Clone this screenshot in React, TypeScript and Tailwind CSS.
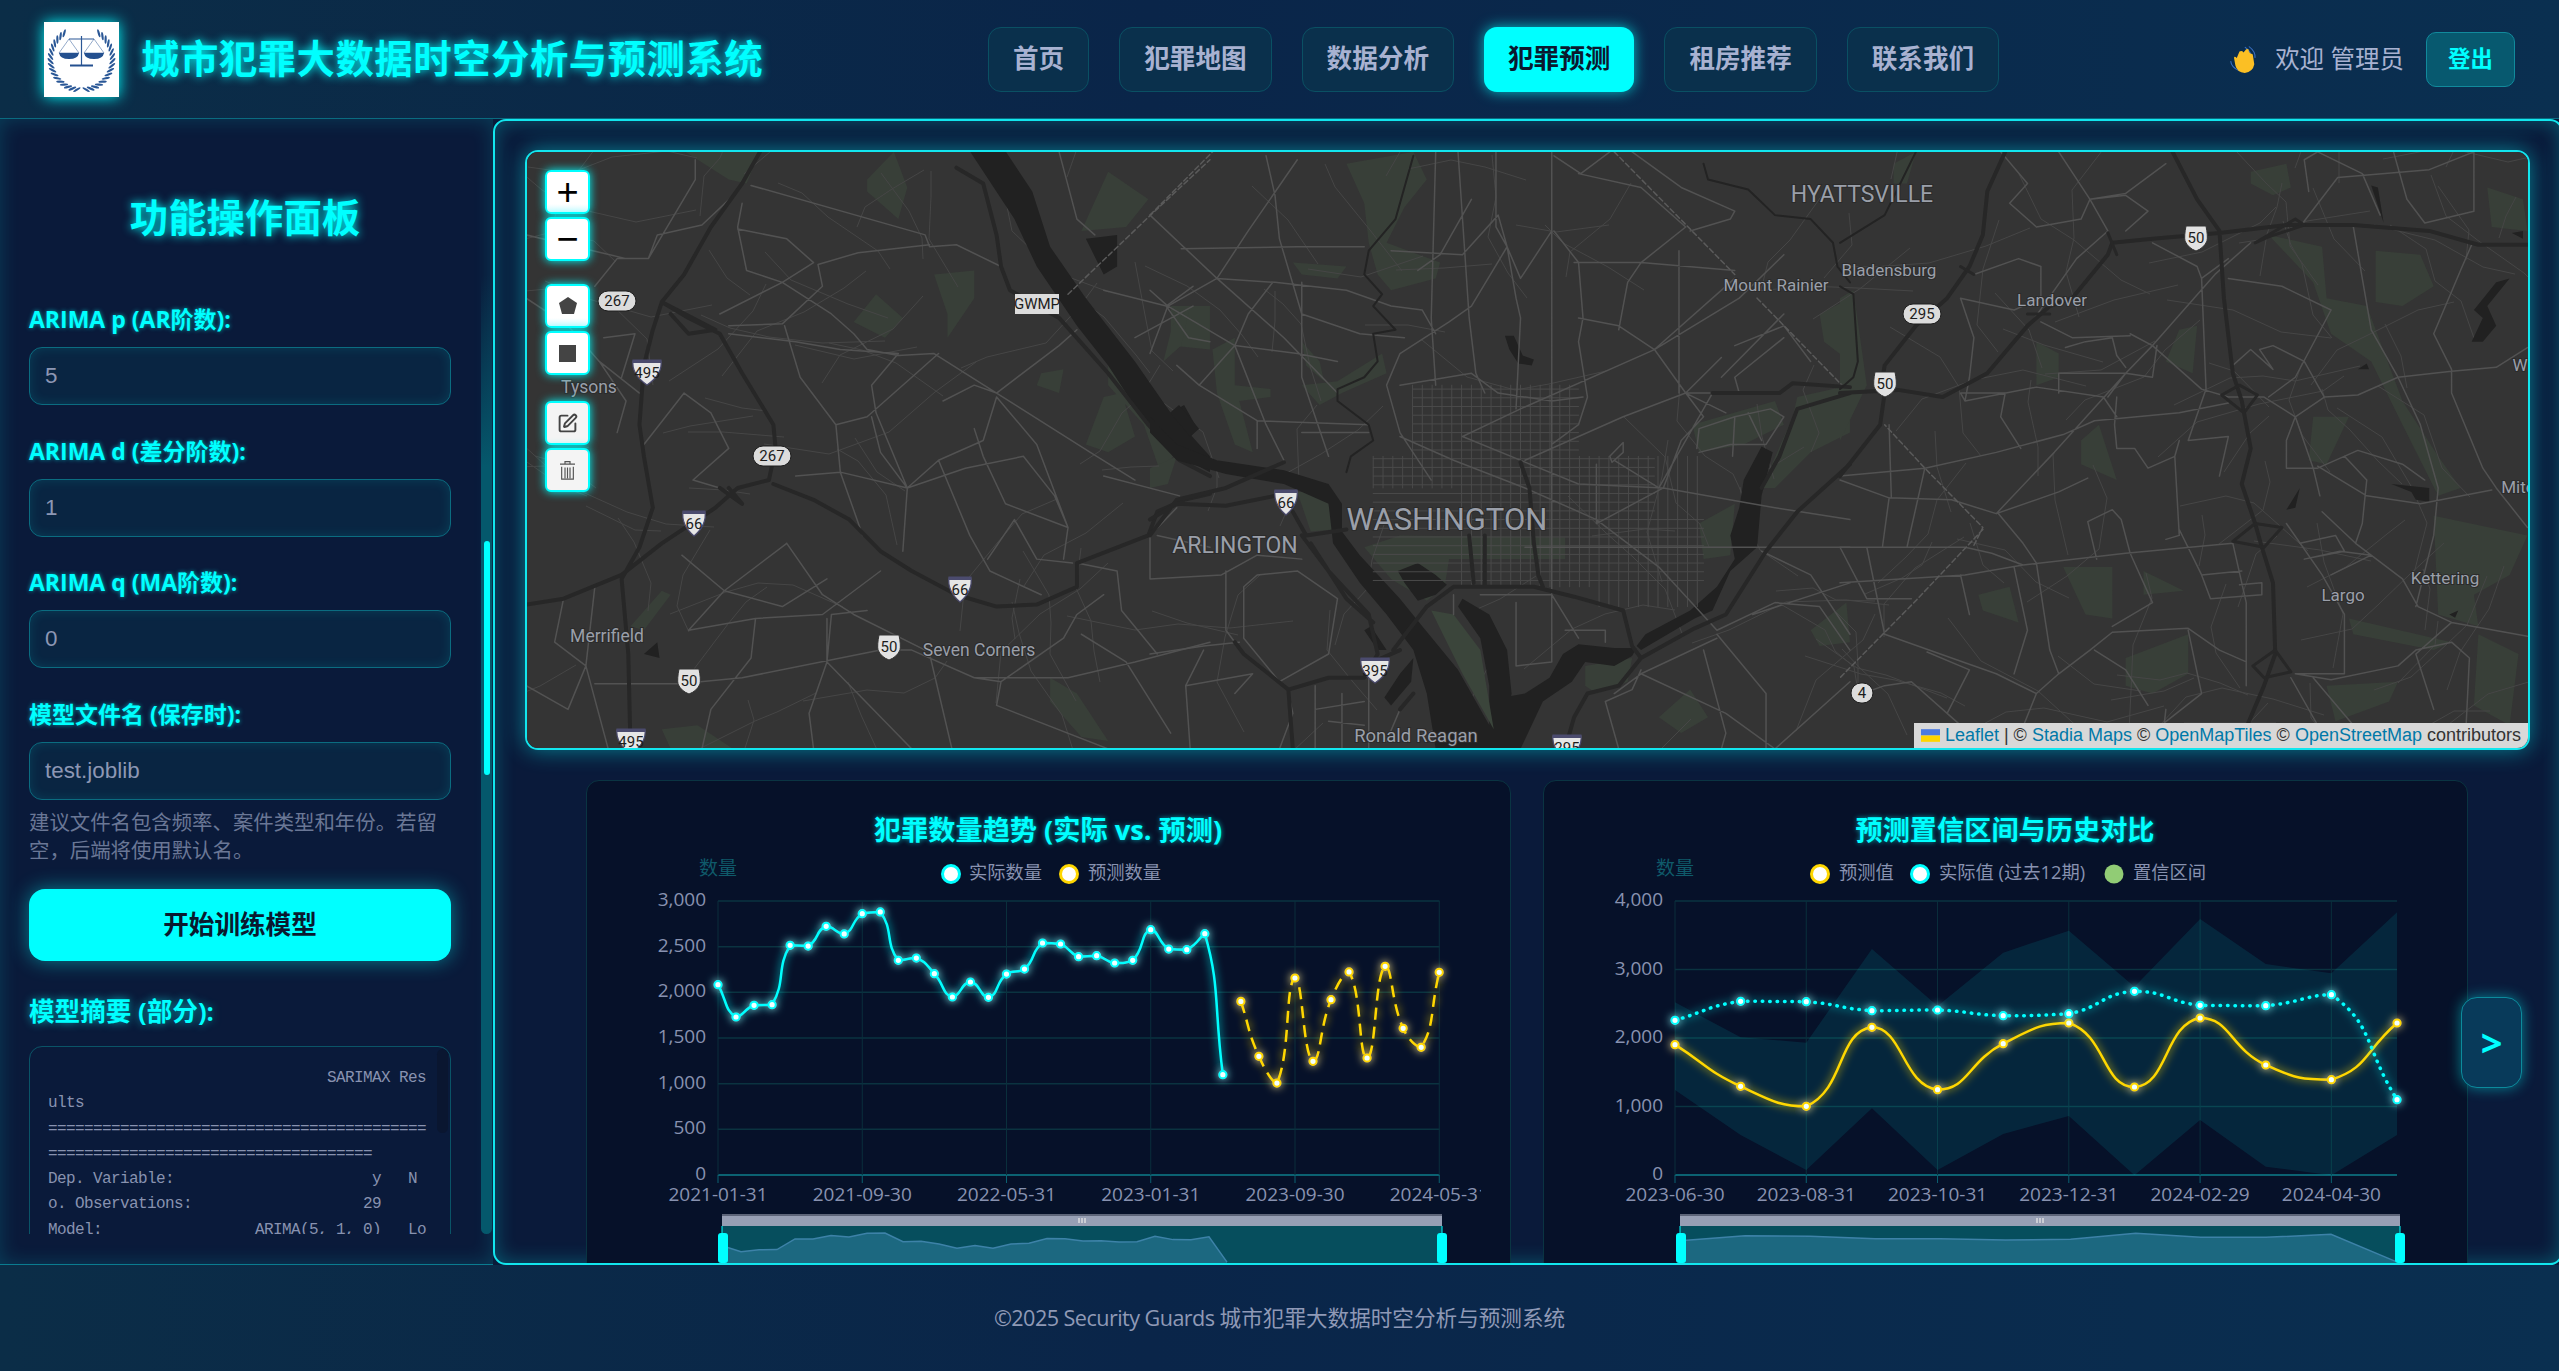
import { SquarePen } from "lucide-react";

// map traced per tile: each string is in its own crop coordinates
const TILES = [
  {
    at: "translate(510 140) scale(0.4464 0.3954)",
    parks:
      "M390 28 L560 28 L530 110 L490 100Z M800 100 L860 30 L890 120 L870 200 L800 130Z M950 340 L1040 330 L1040 400 L980 500 L980 440Z M770 460 L820 390 L880 450 L840 500Z M1280 230 L1340 80 L1430 150 L1380 220Z M1190 590 L1240 580 L1230 640 L1180 620Z M1330 650 L1370 640 L1400 750 L1340 790 L1290 770Z M1340 570 L1430 700 L1490 790 L1460 850 L1420 720 L1340 620Z M1210 1360 L1270 1400 L1340 1520 L1280 1510 L1210 1420Z M340 1490 L420 1480 L500 1540 L360 1540Z M270 1230 L340 1140 L360 1150 L300 1240Z M1480 420 L1568 420 L1568 530 L1480 520Z",
    water:
      "M1030 28 L1110 28 L1170 130 L1210 270 L1290 400 L1400 560 L1480 690 L1568 800 L1568 840 L1500 800 L1420 710 L1340 570 L1270 470 L1180 320 L1130 200Z M1480 690 L1510 670 L1540 730 L1525 750Z M1290 250 L1360 240 L1360 320 L1330 340Z M300 1300 L330 1270 L335 1310Z",
    minor:
      "M36 240 L260 300 L310 300 L330 240 L430 215 L510 130 M540 115 L930 240 L940 270 L1000 265 L1100 320 M520 160 L510 220 L530 330 L610 360 L720 440 L770 490 L800 530 L870 545 L950 540 L1020 590 L1090 640 M690 315 L780 285 L940 265 M690 315 L700 370 L610 465 L490 470 M510 225 L620 250 L680 310 L610 360 L470 440 M415 50 L415 100 L310 300 L240 300 L190 370 M36 400 L130 470 L200 560 L290 640 M490 490 L640 510 L740 530 L870 540 L810 620 L820 690 L890 880 L880 1040 M615 470 L650 600 L730 720 L800 700 L890 610 L960 540 M810 700 L830 790 L890 880 L960 810 L1060 760 L1090 650 M890 880 L1020 830 L1150 800 L1220 900 L1250 980 L1240 1060 M730 720 L740 840 L790 1000 M640 850 L740 840 L890 880 M300 770 L390 640 L450 690 L490 780 L410 860 L470 880 M1090 640 L1230 520 L1270 480 M1090 650 L1180 770 L1250 980 M970 660 L1040 620 L1090 640 L1300 790 L1400 860 M1040 730 L1060 800 L1110 920 L1250 980 M960 810 L1030 1000 L1075 1090 L1190 1150 M1070 1060 L1130 960 L1180 1060 L1260 1070 M620 1020 L700 1150 L770 1200 L930 1290 M620 1020 L480 1140 L400 1240 L550 1210 L700 1200 L830 1090 M385 1050 L480 1140 L610 1180 L710 1110 M120 1160 L100 1270 L170 1330 L130 1440 L36 1380 M190 1130 L170 1330 L220 1540 M550 1210 L540 1310 L450 1440 L430 1540 M710 1210 L710 1320 L670 1450 L680 1540 M800 1190 L720 1200 L710 1320 L900 1540 M940 1300 L990 1540 M1040 1360 L1100 1370 L1090 1430 L1340 1540 M1100 1370 L1240 1260 L1270 1200 L1330 1150 M1330 850 L1500 900 M1280 1250 L1380 1320 L1480 1500 M1270 1070 L1360 1090 L1370 1190 L1450 1300 M1568 1030 L1450 1000 M1230 30 L1270 200 L1310 240 M1330 380 L1470 420 L1530 370 M1470 420 L1520 500 L1568 510 M1400 500 L1530 420 M190 1375 L380 1375 L520 1360 L830 1290 L900 1290 L1040 1360 L1250 1360 L1400 1320 L1568 1270 M210 500 L280 490 L250 600 M200 560 L260 660 L240 740",
    dashed: "M1250 390 L1435 190 L1568 50",
    major:
      "M560 30 L520 110 L450 220 L390 340 L340 410 L320 480 L300 570 L290 720 L300 800 L320 930 L290 1030 L250 1110 L265 1300 L270 1540 M340 410 L400 450 L470 490 L520 590 L590 720 L595 780 L580 860 L510 880 L460 930 L340 1020 L250 1100 L120 1160 L36 1175 M590 870 L680 910 L760 960 L830 1040 L900 1090 L1000 1150 L1090 1180 L1180 1175 L1270 1130 L1270 1070 L1430 1000 L1450 940 L1510 910 L1568 895 M1000 70 L1060 110 L1090 240 L1100 320 L1120 380 L1230 450 L1340 590 L1430 720 L1500 810 L1568 850 M340 410 L460 480 L400 490 L360 440 M470 880 L520 920 L490 880",
  },
  {
    at: "translate(1150 140) scale(0.4464 0.3954)",
    parks:
      "M480 1030 L560 1000 L930 1005 L930 1060 L870 1060 L670 1060 L660 1130 L620 1165 L540 1110Z M440 60 L590 30 L620 100 L570 170 L530 260 L650 310 L640 350 L540 380 L510 340 L490 260 L480 160Z M520 540 L530 590 L430 640 L380 670 L340 620 L420 610Z M140 530 L190 500 L190 620 L270 630 L270 650 L200 660 L230 790 L190 770 L150 640Z M1450 650 L1568 620 L1568 740 L1480 790 L1400 880 L1370 880 L1440 700Z M1230 970 L1310 920 L1300 1050 L1240 1060Z M1500 440 L1568 400 L1568 560 L1510 510Z M1215 720 L1400 660 L1420 720 L1330 770 L1230 790Z M330 890 L395 890 L410 985 L360 990Z M975 1330 L1080 1310 L1070 1370 L1000 1400 L975 1380Z M340 510 L380 560 L390 610 L350 570Z M0 830 L60 800 L40 870 L0 880Z M1140 1460 L1210 1390 L1250 1460 L1190 1500Z M1480 1240 L1560 1170 L1568 1270 L1500 1280Z M320 310 L440 320 L420 350 L340 340Z M50 470 L90 420 L70 520 L30 560Z",
    water:
      "M0 700 L60 770 L150 810 L300 835 L400 870 L430 920 L430 990 L470 1050 L560 1160 L610 1230 L690 1340 L770 1500 L790 1540 L640 1540 L620 1400 L590 1290 L530 1200 L470 1120 L410 1020 L400 920 L300 870 L170 845 L60 810 L0 740Z M700 1160 L760 1200 L800 1290 L810 1400 L800 1480 L790 1410 L840 1400 L895 1360 L925 1300 L960 1275 L1040 1285 L1090 1285 L1080 1305 L1040 1330 L975 1320 L945 1370 L880 1420 L830 1540 L760 1540 L760 1380 L740 1260 L690 1180Z M555 1090 L600 1070 L640 1100 L665 1125 L640 1150 L600 1165 L570 1120Z M795 495 L815 495 L835 545 L860 555 L855 570 L825 565 L805 530Z M45 690 L65 670 L110 730 L90 750Z M1100 1290 L1220 1210 L1260 1190 L1300 1090 L1360 1030 L1370 900 L1395 790 L1370 775 L1330 860 L1320 930 L1300 1000 L1310 1060 L1270 1130 L1210 1190 L1110 1250 L1090 1280Z M525 1410 L560 1350 L590 1310 L585 1370 L540 1430Z M495 1230 L530 1290 L510 1290 L480 1240Z",
    parks2: "M630 1190 L680 1200 L740 1290 L770 1490 L700 1350Z",
    minor:
      "M220 230 L150 350 L40 420 L0 380 M330 50 L220 230 M0 190 L150 350 L300 500 L420 640 M275 360 L220 440 L190 520 L110 620 L60 570 M40 420 L100 460 L190 520 L330 540 L420 560 M150 350 L280 360 L440 380 L540 420 L610 430 L640 490 M70 275 L330 270 L480 270 M260 40 L280 140 L290 250 L340 440 L470 490 L570 500 M340 360 L340 600 L400 800 M220 440 L190 520 L260 720 L300 810 M0 540 L40 420 M110 620 L240 710 L240 780 M240 710 L490 720 M340 740 L490 740 M540 280 L700 290 L780 190 L800 270 L830 350 L900 230 M640 30 L630 450 L640 620 M690 30 L715 450 L730 590 L750 640 M775 30 L775 220 L800 270 L820 400 L830 450 L820 680 M720 150 L650 290 L600 330 M800 270 L720 420 L670 460 L560 540 L530 620 L560 740 L630 860 M905 230 L960 310 L970 450 L960 510 L980 650 L960 720 L900 770 M905 40 L965 85 L1030 30 M960 85 L1100 120 L1200 220 L1100 310 L1070 360 L1050 480 M950 310 L1100 310 L1310 330 M960 450 L1050 470 L1130 530 L1200 640 L1240 700 L1190 760 L1150 880 M1080 30 L1190 120 L1310 180 L1300 200 L1210 230 M1185 280 L1185 640 M700 750 L830 680 L1130 530 L1320 400 L1420 290 M840 810 L1060 700 L1200 640 L1260 640 M560 620 L720 590 L780 640 L900 660 L970 650 M560 750 L680 810 L840 880 L1000 960 L1140 1080 L1270 1240 M700 750 L960 870 L1150 880 L1400 930 L1568 960 M900 30 L900 1100 L900 1320 M840 1030 L1568 1030 M1000 820 L1000 970 L1150 880 M1280 550 L1200 640 L1290 690 M1260 640 L1140 880 L1040 810 M1320 640 L1310 600 L1420 500 M1130 530 L1310 350 M1280 600 L1420 440 M1310 520 L1420 470 L1480 560 M1030 800 L1060 765 L1060 790 L1035 815Z M1225 780 L1230 730 L1310 700 L1390 680 L1420 700 L1380 770 L1300 770 L1230 790 M1310 700 L1305 800 M1340 690 L1370 760 M1270 1240 L1400 1170 L1500 1180 L1568 1290 M1370 1040 L1480 1100 L1568 1250 M1270 1250 L1380 1400 L1380 1540 M1240 1290 L1290 1500 L1280 1540 M1100 1350 L1290 1450 L1400 1540 L1568 1370 M1100 1340 L1080 1390 L1020 1420 L1050 1540 M0 1110 L160 1100 L240 1050 L340 1060 M210 1130 L210 1260 L290 1370 L400 1300 L420 1160 L330 1090 L240 1100 L210 1130 M170 1090 L170 1240 L210 1300 M0 1300 L120 1280 L200 1270 M120 1290 L80 1380 L90 1540 M80 1380 L230 1350 L190 1400 M310 1400 L320 1450 L290 1540 M370 1380 L370 1540 M430 1400 L430 1540 M370 1440 L480 1420 M400 1470 L480 1480 M490 1350 L490 1540 M560 1440 L530 1520 M0 1110 L0 1000 L60 930 M680 1150 L680 1200 M820 1170 L820 1330 L900 1320 M740 1150 L900 1150 L960 1260 M930 1240 L1020 1240 L1020 1270 M1040 1400 L1100 1350 L1270 1260 M1350 1200 L1568 1120",
    dashed: "M0 190 L140 30 M1040 30 L1310 340 M1360 400 L1550 620",
    grid: true,
    major:
      "M0 960 L60 920 L170 925 L280 900 M0 1000 L60 910 L170 880 L300 815 M320 940 L350 1000 L440 985 M340 1000 L400 1090 L490 1200 L510 1300 L480 1360 L400 1360 L310 1390 L210 1300 L190 1270 M545 1290 L620 1180 L680 1130 L860 1130 L950 1155 L1060 1190 L1080 1280 L1100 1310 L1220 1235 L1290 1200 L1380 1040 L1450 940 L1568 820 M1100 1310 L1050 1380 L980 1400 L950 1460 L930 1540 M830 815 L850 880 L860 1020 L870 1100 L880 1130 M715 1000 L725 1120 M750 1000 L750 1130 M1260 640 L1410 640 L1440 615 L1568 625 M1568 640 L1450 680 L1410 800 L1370 880 M500 1320 L560 1290 M310 1390 L320 1540 M360 1020 L440 1160 L500 1220 M560 1440 L590 1400",
    thin: "M590 40 L550 200 L490 280 L480 340 L520 390 L500 420 L550 480 L500 490 L510 560 L480 600 L420 630 L420 660 L490 720 L500 760 L450 800 L440 840 M1240 60 L1250 100 L1340 125 L1400 190 L1480 200 L1530 260 L1540 320 L1568 360",
  },
  {
    at: "translate(1840 140) scale(0.4464 0.3954)",
    parks:
      "M920 80 L1000 60 L1010 120 L970 140 L920 110Z M960 240 L1080 270 L1090 400 L1180 420 L1260 660 L1340 800 L1390 880 L1340 900 L1260 720 L1190 560 L1100 490 L1060 360Z M1200 280 L1300 290 L1330 370 L1260 420 L1200 410Z M1330 950 L1540 1000 L1500 1100 L1420 1150 L1430 1230 L1340 1200Z M1060 700 L1140 700 L1090 820 L1050 810Z M500 1080 L610 1080 L610 1210 L550 1200Z M680 1090 L770 1140 L680 1150Z M310 1150 L380 1130 L400 1220 L320 1190Z M640 1310 L780 1250 L780 1350 L700 1400 L640 1380Z M760 480 L800 470 L790 590 L730 560Z M1140 1210 L1370 1270 L1330 1290 L1150 1250Z M1430 1250 L1520 1300 L1500 1480 L1420 1430Z M1090 1380 L1250 1370 L1230 1420 L1110 1470Z M440 510 L490 540 L490 600 L440 620Z M540 760 L580 720 L620 860 L540 820Z M1450 120 L1530 150 L1540 230 L1460 220Z M0 400 L30 380 L60 620 L0 760Z M120 60 L170 30 L150 110 L120 110Z",
    water:
      "M1420 430 L1470 360 L1500 350 L1450 420 L1470 470 L1440 510 L1415 510 L1440 450Z M1235 870 L1320 880 L1320 915 L1290 910 L1280 890Z M1190 115 L1205 120 L1218 210Z M1000 935 L1030 880 L1020 930Z M1505 235 L1530 230 L1530 250Z M1160 580 L1180 565 L1185 580Z M1365 1200 L1385 1190 L1378 1208Z",
    minor:
      "M0 850 L190 830 L350 790 L500 745 L570 710 L760 690 L870 665 M0 860 L110 905 L250 910 L350 945 L490 890 L555 855 M350 945 L480 790 L640 590 L700 520 L840 340 L920 260 M280 660 L440 625 L590 650 L620 700 M650 490 L700 520 L810 630 L870 650 L950 650 L1020 700 L1060 830 L1075 900 M450 460 L520 500 L650 495 M0 1030 L280 1030 L340 1045 L410 1075 L640 1045 L880 1020 M0 1120 L280 1100 L410 1075 M355 945 L410 1020 L440 1070 L470 1290 L490 1350 L440 1400 L350 1350 L250 1310 L100 1250 M610 935 L555 965 L575 1060 M610 935 L630 960 L650 1045 L700 1170 L610 1230 M750 800 L690 830 L660 780 L620 780 L615 720 L620 650 M760 760 L750 800 L760 1000 L730 1010 M760 985 L810 1100 L830 1160 L945 1150 L945 1120 L895 1125 M810 1100 L900 1090 M880 1020 L910 1170 L910 1380 M610 1245 L780 1235 L850 1290 L910 1320 M780 1240 L810 1400 L720 1480 M610 1245 L560 1290 L490 1350 M1020 700 L1085 650 L1160 645 L1250 600 L1370 585 L1470 575 L1540 525 M1020 700 L1000 760 L1000 830 L1070 830 L1160 785 L1260 820 L1310 860 M1070 825 L1180 900 L1300 920 L1460 885 M1130 800 L1180 860 L1170 970 L1155 1020 L1080 940 M1155 1020 L1260 1110 L1295 1180 L1370 1220 L1540 1255 M1000 970 L1080 1100 L1130 1200 L1130 1350 L1020 1350 M1030 1020 L1110 1000 L1130 1040 L1040 1060 M1040 1060 L1120 1040 L1190 1050 L1100 1100 M1020 1350 L1100 1365 L1250 1330 L1290 1290 L1370 1270 L1410 1310 L1400 1540 M1150 220 L1190 480 L1250 600 L1300 720 L1340 880 L1330 1000 L1290 1180 M1030 220 L1115 95 L1320 75 L1420 30 M1050 130 L1040 50 L1070 30 L1170 85 L1210 190 M1240 30 L1270 150 L1310 210 L1420 180 L1420 30 M870 350 L990 370 L1100 430 L1020 600 L960 650 M880 570 L920 530 L970 580 L940 530 L970 520 L1040 560 L1085 650 M1415 265 L1390 330 L1330 490 L1370 580 L1370 640 L1440 830 L1470 880 L1540 980 M640 590 L700 600 L710 520 M600 650 L640 590 L490 590 L490 640 M505 525 L550 510 L610 500 L620 545 L640 575 M280 660 L270 640 L370 640 L360 700 L405 780 M560 150 L600 230 L530 300 L430 460 M560 150 L640 140 L690 180 L640 230 M730 60 L640 135 L560 150 L490 30 M560 150 L540 200 L440 220 L380 160 L420 110 L360 30 M270 400 L390 430 M300 340 L400 300 L450 320 L450 400 L390 430 M700 260 L800 320 L810 350 L870 300 M810 350 L820 630 L780 760 L870 750 L850 850 M270 400 L300 500 L290 600 L280 660 M0 1030 L60 1160 L160 1160 M100 1250 L60 1030 M190 830 L150 1030 M110 905 L95 1030 M110 720 L115 905 M290 1200 L270 1100 M390 1080 L420 1240 L390 1350 M50 1400 L100 1380 L160 1370 L240 1450 L330 1540 M240 1450 L290 1340 L195 1295 M440 1400 L390 1540 M730 1440 L720 1540 M1295 1180 L1370 1220 L1290 1300 L1330 1440 M1060 1360 L1150 1480 M1010 1360 L1100 1540 M570 1290 L640 1340 L690 1430",
    dashed: "M300 1025 L320 980 L190 830 L100 720 M320 985 L170 1165 L0 1360",
    major:
      "M745 30 L800 150 L850 230 L860 400 L880 590 L900 660 L920 780 L900 870 L930 970 L945 1030 L970 1120 L975 1300 L950 1380 L890 1540 M0 640 L130 632 L230 650 L330 590 L420 470 L470 420 L520 400 L600 290 L610 260 L700 250 L850 235 L1000 215 L1150 215 L1320 230 L1430 265 L1540 265 M370 30 L330 130 L320 240 L290 320 L240 400 L170 470 L100 570 L90 640 M100 640 L90 720 L0 850",
    ramps:
      "M855 645 L895 620 L935 645 L905 690Z M880 1015 L930 970 L990 980 L950 1030Z M925 1330 L975 1290 L1010 1345 L950 1360Z M930 260 L1020 200 L1040 215 L960 245Z M270 320 L300 340 M420 440 L470 440 M600 235 L620 290",
    thin: "M170 30 L100 190 L0 260 M0 370 L30 390 L40 560 L30 600 L0 630",
  },
];

const PLACES: [string, number, number, number][] = [
  ["Tysons", 589, 388, 17.5],
  ["Merrifield", 607, 637, 17.5],
  ["Seven Corners", 979, 651, 17.5],
  ["ARLINGTON", 1235, 547, 23],
  ["WASHINGTON", 1447, 522, 31],
  ["Ronald Reagan", 1416, 737, 18.5],
  ["Mount Rainier", 1776, 287, 17],
  ["HYATTSVILLE", 1862, 196, 23],
  ["Bladensburg", 1889, 272, 17],
  ["Landover", 2052, 302, 17],
  ["Largo", 2343, 597, 17],
  ["Kettering", 2445, 580, 17],
  ["Mitc", 2518, 489, 17],
  ["W", 2520, 367, 17],
];

const SHIELDS: [string, string, number, number][] = [
  ["oval", "267", 617, 301],
  ["oval", "267", 772, 456],
  ["rect", "GWMP", 1037, 304],
  ["i", "495", 647, 372],
  ["i", "495", 631, 741],
  ["i", "66", 694, 523],
  ["i", "66", 960, 589],
  ["us", "50", 889, 647],
  ["us", "50", 689, 681],
  ["i", "66", 1286, 502],
  ["i", "395", 1375, 670],
  ["i", "295", 1567, 747],
  ["oval", "295", 1922, 314],
  ["us", "50", 1885, 384],
  ["us", "50", 2196, 238],
  ["oval", "4", 1862, 693],
];

function Shield({ kind, label, x, y }: { kind: string; label: string; x: number; y: number }) {
  const half = label.length > 2 ? 14 : 11;
  return (
    <g>
      {kind === "oval" && (
        <rect x={x - (label.length > 1 ? 19 : 11)} y={y - 10} width={label.length > 1 ? 38 : 22} height={20} rx={10} fill="#dcdcdc" stroke="#1e1e1e" strokeWidth={1} />
      )}
      {kind === "rect" && <rect x={x - 22} y={y - 10} width={44} height={20} fill="#dcdcdc" />}
      {kind === "us" && (
        <path d={`M${x - 10} ${y - 12} h20 q2 10 1 15 q-3 7 -11 10 q-8 -3 -11 -10 q-1 -5 1 -15z`} fill="#e2e2e2" stroke="#333" strokeWidth={1} />
      )}
      {kind === "i" && (
        <>
          <path d={`M${x - half} ${y - 12} h${half * 2} q2 14 -${half} 25 q-${half + 2} -11 -${half} -25z`} fill="#e6e6e6" stroke="#4b4b6e" strokeWidth={1.2} />
          <path d={`M${x - half} ${y - 12} h${half * 2} v3 h-${half * 2}z`} fill="#4b4b6e" />
        </>
      )}
      <text x={x} y={kind === "i" ? y + 2 : y + 1} textAnchor="middle" dominantBaseline="middle" className="font-['Roboto',sans-serif] text-[15px] fill-[#1c1c1c]">
        {label}
      </text>
    </g>
  );
}

function downtownGrid() {
  let d = "";
  for (let x = 500; x <= 1240; x += 22) {
    const top = x > 580 && x < 960 ? 620 : 800;
    const bottom = x < 680 ? 880 : x > 1000 ? 1180 : 1130;
    d += `M${x} ${top} L${x} ${bottom} `;
  }
  for (let y = 630; y <= 1130; y += 22) {
    const left = y < 800 ? 590 : 500;
    const right = y < 800 ? 960 : y < 960 ? 1130 : 1240;
    d += `M${left} ${y} L${right} ${y} `;
  }
  return d;
}

// fine street texture, same output every run
function streetNet() {
  let seed = 7;
  const rnd = () => {
    seed = (seed * 16807) % 2147483647;
    return seed / 2147483647;
  };
  let d = "";
  for (let i = 0; i < 190; i++) {
    let x = 527 + rnd() * 2001;
    let y = 152 + rnd() * 596;
    if (x > 1340 && x < 1640 && y > 380 && y < 600) continue;
    d += `M${x.toFixed(0)} ${y.toFixed(0)}`;
    let a = rnd() * 6.28;
    const n = 2 + Math.floor(rnd() * 3);
    for (let j = 0; j < n; j++) {
      a += (rnd() - 0.5) * 1.3;
      const l = 25 + rnd() * 45;
      x += Math.cos(a) * l;
      y += Math.sin(a) * l * 0.8;
      d += ` L${x.toFixed(0)} ${y.toFixed(0)}`;
    }
    d += " ";
  }
  return d;
}

function MapArt() {
  return (
    <svg viewBox="527 152 2001 596" className="block w-full h-full">
      <rect x="527" y="152" width="2001" height="596" fill="#343434" />
      {TILES.map((t, i) => (
        <g key={i} transform={t.at}>
          <path d={t.parks} fill="#383f38" />
        </g>
      ))}
      <path d={streetNet()} fill="none" stroke="#464646" strokeWidth={1} strokeLinejoin="round" />
      {TILES.map((t, i) => (
        <g key={i} transform={t.at} fill="none" strokeLinejoin="round" strokeLinecap="round">
          <path d={t.water} fill="#212121" />
          {t.parks2 && <path d={t.parks2} fill="#3b453b" />}
          {t.grid && <path d={downtownGrid()} stroke="#4a4a4a" strokeWidth={1} vectorEffect="non-scaling-stroke" />}
          <path d={t.minor} stroke="#525252" strokeWidth={1.5} vectorEffect="non-scaling-stroke" />
          <path d={t.dashed} stroke="#5a5a5a" strokeWidth={1.5} strokeDasharray="5 3" vectorEffect="non-scaling-stroke" />
          {t.thin && <path d={t.thin} stroke="#232323" strokeWidth={2} vectorEffect="non-scaling-stroke" />}
          <path d={t.major} stroke="#272727" strokeWidth={4} vectorEffect="non-scaling-stroke" />
          {t.ramps && <path d={t.ramps} stroke="#272727" strokeWidth={3} vectorEffect="non-scaling-stroke" />}
        </g>
      ))}
      {PLACES.map(([name, x, y, size]) => (
        <text key={name} x={x} y={y} textAnchor="middle" dominantBaseline="middle" fontSize={size} stroke="#2b2b2b" strokeWidth={2} paintOrder="stroke" className="font-['Roboto',sans-serif] fill-[#9a9fa9]">
          {name}
        </text>
      ))}
      {SHIELDS.map(([kind, label, x, y]) => (
        <Shield key={label + x} kind={kind} label={label} x={x} y={y} />
      ))}
    </svg>
  );
}

function smoothPath(pts: number[][]) {
  const k = 0.5;
  const clamp = (v: number, a: number, b: number) => Math.min(Math.max(v, Math.min(a, b)), Math.max(a, b));
  const handle = (i: number) => {
    const p = pts[i];
    const prev = pts[i - 1] ?? p;
    const next = pts[i + 1] ?? p;
    const vx = next[0] - prev[0];
    const vy = next[1] - prev[1];
    const a = Math.hypot(p[0] - prev[0], p[1] - prev[1]);
    const b = Math.hypot(next[0] - p[0], next[1] - p[1]);
    const r = a + b === 0 ? 0 : b / (a + b);
    return {
      inX: clamp(p[0] - vx * k * (1 - r), prev[0], p[0]),
      inY: clamp(p[1] - vy * k * (1 - r), prev[1], p[1]),
      outX: clamp(p[0] + vx * k * r, p[0], next[0]),
      outY: clamp(p[1] + vy * k * r, p[1], next[1]),
    };
  };
  let d = `M${pts[0][0]} ${pts[0][1]}`;
  for (let i = 0; i < pts.length - 1; i++) {
    const a = handle(i);
    const b = handle(i + 1);
    d += ` C${a.outX} ${a.outY} ${b.inX} ${b.inY} ${pts[i + 1][0]} ${pts[i + 1][1]}`;
  }
  return d;
}

type Series = { pts: number[][]; color: string; dash?: string; round?: boolean };

function Zoomer({ left, right, area }: { left: number; right: number; area: number[][] }) {
  const line = area.map((p) => p.join(" ")).join(" L");
  return (
    <g>
      <rect x={left} y={1226} width={right - left} height={45} fill="#064e5d" />
      <path d={`M${area[0][0]} 1266 L${line} L${area[area.length - 1][0]} 1266Z`} fill="#1c6880" />
      <path d={`M${line}`} fill="none" stroke="#3d82a8" strokeWidth={1.5} />
      <rect x={left} y={1215} width={right - left} height={11} fill="#979fb4" />
      <rect x={left} y={1214} width={right - left} height={2} fill="#5d6579" />
      <path d={`M${(left + right) / 2 - 3} 1218 v5 M${(left + right) / 2} 1218 v5 M${(left + right) / 2 + 3} 1218 v5`} stroke="#e6e6e6" strokeWidth={1.3} />
      <path d={`M${left} 1226 v8 M${right} 1226 v8`} stroke="#00ffff" />
      <rect x={left - 4} y={1233} width={10} height={30} rx={3} fill="#00ffff" />
      <rect x={right - 5} y={1233} width={10} height={30} rx={3} fill="#00ffff" />
    </g>
  );
}

function Chart({
  id,
  card,
  left,
  right,
  yMax,
  yStep,
  xLabels,
  xStep,
  legend,
  band,
  series,
  clipRight,
  zoom,
}: {
  id: string;
  card: number;
  left: number;
  right: number;
  yMax: number;
  yStep: number;
  xLabels: string[];
  xStep: number;
  legend: { icon: number; text: string; at: number; color: string; solid?: boolean }[];
  band?: number[][];
  series: Series[];
  clipRight: number;
  zoom: { left: number; right: number; area: number[][] };
}) {
  const yTicks: number[] = [];
  for (let v = 0; v <= yMax; v += yStep) yTicks.push(v);
  const yOf = (v: number) => 1175 - (v / yMax) * 274;
  return (
    <svg viewBox={`${card} 850 923 430`} className="block w-[923px] h-[430px]">
      <defs>
        <filter id={`glow-${id}`} x="-10%" y="-20%" width="120%" height="140%">
          <feGaussianBlur stdDeviation="4" result="b" />
          <feMerge>
            <feMergeNode in="b" />
            <feMergeNode in="SourceGraphic" />
          </feMerge>
        </filter>
        <clipPath id={`clip-${id}`}>
          <rect x={card} y={850} width={clipRight - card} height={430} />
        </clipPath>
      </defs>
      <text x={left} y={870} textAnchor="middle" dominantBaseline="middle" className="text-[19px] fill-[#0f5a6a]">
        数量
      </text>
      {legend.map((l) => (
        <g key={l.text}>
          <circle cx={l.icon} cy={874} r={l.solid ? 9.5 : 8.5} fill={l.solid ? l.color : "#fff"} stroke={l.color} strokeWidth={l.solid ? 0 : 3} />
          <text x={l.at} y={874} dominantBaseline="middle" className="text-[18.3px] fill-[#8892b0]">
            {l.text}
          </text>
        </g>
      ))}
      {yTicks.map((v) => (
        <g key={v}>
          <line x1={left} x2={right} y1={yOf(v)} y2={yOf(v)} stroke={v === 0 ? "#0b6272" : "#0a3340"} strokeWidth={v === 0 ? 2 : 1.5} />
          <text x={left - 12} y={yOf(v)} textAnchor="end" dominantBaseline="middle" className="text-[19px] fill-[#8892b0]">
            {v.toLocaleString("en-US")}
          </text>
        </g>
      ))}
      <g clipPath={`url(#clip-${id})`}>
        {xLabels.map((t, i) => {
          const x = left + i * xStep;
          return (
            <g key={t}>
              <line x1={x} x2={x} y1={901} y2={1175} stroke="#0a2f3c" />
              <line x1={x} x2={x} y1={1175} y2={1183} stroke="#0b6272" />
              <text x={x} y={1196} textAnchor="middle" dominantBaseline="middle" className="text-[19px] fill-[#8892b0]">
                {t}
              </text>
            </g>
          );
        })}
      </g>
      {band && (
        <path
          d={`M${band.map((p) => `${p[0]} ${p[1]}`).join(" L")} L${band
            .slice()
            .reverse()
            .map((p) => `${p[0]} ${p[2]}`)
            .join(" L")}Z`}
          fill="#00ffff"
          fillOpacity={0.09}
        />
      )}
      {series.map((s, i) => (
        <g key={i} filter={`url(#glow-${id})`}>
          <path d={smoothPath(s.pts)} fill="none" stroke={s.color} strokeWidth={s.round ? 3.5 : 2.5} strokeDasharray={s.dash} strokeLinecap={s.round ? "round" : "butt"} />
          {s.pts.map((p, j) => (
            <circle key={j} cx={p[0]} cy={p[1]} r={3.6} fill="#f2ffff" stroke={s.color} strokeWidth={2} />
          ))}
        </g>
      ))}
      <Zoomer {...zoom} />
    </svg>
  );
}

const A1 = [2084, 1730, 1858, 1865, 2515, 2507, 2723, 2639, 2861, 2880, 2350, 2375, 2204, 1949, 2113, 1945, 2200, 2255, 2540, 2529, 2390, 2401, 2321, 2350, 2686, 2474, 2467, 2642, 1098];
const F1 = [1901, 1299, 1007, 2157, 1245, 1920, 2223, 1281, 2285, 1606, 1398, 2219];
const F2 = [1903, 1294, 1002, 2156, 1246, 1917, 2219, 1285, 2292, 1606, 1392, 2219];
const A2 = [2258, 2535, 2530, 2399, 2409, 2326, 2355, 2681, 2477, 2472, 2633, 1100];
const UP = [697, 802, 818, 537, 708, 548, 482, 650, 447, 582, 610, 427];
const LOW = [960, 1095, 1200, 1015, 1200, 1092, 1038, 1216, 1050, 1190, 1216, 1095];

const y3 = (v: number) => 1175 - (v / 3000) * 274;
const y4 = (v: number) => 1175 - (v / 4000) * 274;
const miniY = (v: number) => 1280 - v * 0.01632;

const CHART_ONE = {
  id: "trend",
  card: 587,
  left: 718,
  right: 1439.5,
  yMax: 3000,
  yStep: 500,
  xLabels: ["2021-01-31", "2021-09-30", "2022-05-31", "2023-01-31", "2023-09-30", "2024-05-31"],
  xStep: 144.25,
  clipRight: 1481,
  legend: [
    { icon: 951, text: "实际数量", at: 969, color: "#00ffff" },
    { icon: 1069, text: "预测数量", at: 1088, color: "#ffd700" },
  ],
  series: [
    { pts: A1.map((v, i) => [718 + i * 18.03, y3(v)]), color: "#00ffff" },
    { pts: F1.map((v, i) => [718 + (29 + i) * 18.03, y3(v)]), color: "#ffd700", dash: "12 7" },
  ],
  zoom: {
    left: 722,
    right: 1442,
    area: A1.map((v, i) => [723 + i * 18, miniY(v)]),
  },
};

const CHART_TWO = {
  id: "band",
  card: 1544,
  left: 1675,
  right: 2397,
  yMax: 4000,
  yStep: 1000,
  xLabels: ["2023-06-30", "2023-08-31", "2023-10-31", "2023-12-31", "2024-02-29", "2024-04-30"],
  xStep: 131.27,
  clipRight: 2467,
  legend: [
    { icon: 1820, text: "预测值", at: 1839, color: "#ffd700" },
    { icon: 1920, text: "实际值 (过去12期)", at: 1939, color: "#00ffff" },
    { icon: 2114, text: "置信区间", at: 2133, color: "#91cc75", solid: true },
  ],
  band: UP.map((u, i) => [1675 + i * 65.64, 770 + u / 3, 770 + LOW[i] / 3]),
  series: [
    { pts: F2.map((v, i) => [1675 + i * 65.64, y4(v)]), color: "#ffd700" },
    { pts: A2.map((v, i) => [1675 + i * 65.64, y4(v)]), color: "#00ffff", dash: "0.5 7", round: true },
  ],
  zoom: {
    left: 1680,
    right: 2400,
    area: [1412, 1397, 1399, 1406, 1406, 1410, 1408, 1390, 1402, 1402, 1393, 1475].map((p, i) => [1680 + i * 65.1, 770 + p / 3]),
  },
};

const SUMMARY = `                               SARIMAX Res
ults
==========================================
====================================
Dep. Variable:                      y   N
o. Observations:                   29
Model:                 ARIMA(5, 1, 0)   Lo`;

function Logo() {
  const leaves = [];
  for (let i = 0; i < 17; i++) {
    const a = Math.PI / 2 + 0.15 + (i / 16) * 2.4;
    const x = 37.5 + Math.cos(a) * 31;
    const y = 37 + Math.sin(a) * 31;
    const deg = (a * 180) / Math.PI + 50;
    leaves.push(<ellipse key={`l${i}`} cx={x} cy={y} rx={4.2} ry={1.1} transform={`rotate(${deg} ${x} ${y})`} fill="#2a5796" />);
    leaves.push(<ellipse key={`r${i}`} cx={75 - x} cy={y} rx={4.2} ry={1.1} transform={`rotate(${180 - deg} ${75 - x} ${y})`} fill="#2a5796" />);
  }
  return (
    <svg viewBox="0 0 75 75" className="block w-[75px] h-[75px] bg-white shadow-[0_0_14px_#00ffff]">
      {leaves}
      <g fill="none" stroke="#2a5796">
        <path d="M25 17 H50 M37.5 14 V43" strokeWidth={1.2} />
        <path d="M25 17 L15 31 H35 Z M50 17 L40 31 H60 Z" strokeWidth={0.5} />
      </g>
      <path d="M26 42.5 H49 V44.5 H26 Z M15 31 H35 Q34 37 25 37 Q16 37 15 31 Z M40 31 H60 Q59 37 50 37 Q41 37 40 31 Z" fill="#24508f" />
    </svg>
  );
}

function Hand() {
  return (
    <svg viewBox="3 2 20 25" preserveAspectRatio="none" className="block w-[27px] h-[27px]">
      <path d="M14 3 Q19 7 19 14 M10 25 Q4 22 3.5 16 M17 2.5 Q22 7 21.5 13" fill="none" stroke="#3a6fc4" strokeWidth={0.8} />
      <path d="M10 7 Q12 6 13 8 L15 5 Q17 4 17 7 L18 9 Q20 9 20 11 L21 19 Q20 26 14 27 Q8 26 7 20 L6 13 Q6 11 8 13 Z" fill="#fbbf24" />
    </svg>
  );
}

function MapButton({ children, soft, last }: { children: React.ReactNode; soft?: boolean; last?: boolean }) {
  return (
    <div
      className={`w-[45px] h-[44px] mb-[3px] flex items-center justify-center rounded-[6px] border-2 border-[#00ffff] shadow-[0_0_10px_#00ffff] ${soft ? "bg-[#f4f4f4]" : last ? "bg-white" : "bg-[linear-gradient(#fff_80%,#d4fbff)]"}`}
    >
      {children}
    </div>
  );
}

function Field({ label, value, mb }: { label: string; value: string; mb: string }) {
  return (
    <div className={mb}>
      <div className="h-[32px] leading-[32px] text-[23px] font-bold text-[#00ffff] [text-shadow:0_0_4px_rgba(0,255,255,.6)]">{label}</div>
      <div className="mt-[12px] h-[58px] px-[15px] flex items-center rounded-[13px] border border-[#0b6c80] bg-[#092542] shadow-[inset_0_0_12px_rgba(0,255,255,.12)] text-[22.4px] text-[#8d97b4] font-['Liberation_Sans',sans-serif]">
        {value}
      </div>
    </div>
  );
}

const NAV = ["首页", "犯罪地图", "数据分析", "犯罪预测", "租房推荐", "联系我们"];

export default function App() {
  return (
    <div className="w-[2559px] h-[1371px] flex flex-col overflow-hidden bg-[#0a1a3a] font-['Open_Sans','Noto_Sans_CJK_SC',sans-serif]">
      <header className="h-[119px] shrink-0 flex items-center border-b border-[#0a6b80] bg-[linear-gradient(90deg,#0b2d47,#0a2549_45%,#0a2f50)]">
        <div className="w-[988px] shrink-0 pl-[44px] flex items-center gap-[22px]">
          <Logo />
          <h1 className="text-[38.4px] tracking-[0.5px] font-bold text-[#00ffff] [text-shadow:0_0_10px_#00ffff]">城市犯罪大数据时空分析与预测系统</h1>
        </div>
        <nav className="flex gap-[30px]">
          {NAV.map((n) => (
            <div
              key={n}
              className={
                n === "犯罪预测"
                  ? "h-[65px] px-[24px] flex items-center rounded-[13px] bg-[#00ffff] text-[#0a192f] text-[25.6px] font-bold shadow-[0_0_14px_rgba(0,255,255,.7)]"
                  : "h-[65px] px-[24px] flex items-center rounded-[13px] border border-[#0a5063] bg-[#0a304c] text-[#a8b2d1] text-[25.6px] font-bold"
              }
            >
              {n}
            </div>
          ))}
        </nav>
        <div className="ml-auto pr-[44px] flex items-center">
          <Hand />
          <span className="ml-[18px] text-[24.5px] text-[#a8b2d1]">欢迎 管理员</span>
          <div className="ml-[22px] w-[89px] h-[55px] flex items-center justify-center rounded-[10px] border border-[#118a9c] bg-[#07596f] text-[22.4px] font-bold text-[#00ffff]">登出</div>
        </div>
      </header>

      <div className="h-[1146px] shrink-0 flex">
        <aside className="relative w-[493px] shrink-0 flex flex-col pb-[30px] border-b border-[#0a7c90] shadow-[inset_0_0_20px_rgba(0,255,255,.16)]">
          <div className="flex-1 min-h-0 overflow-hidden pl-[29px] pr-[42px] pt-[75px]">
            <h2 className="h-[46px] leading-[46px] text-center text-[38.4px] font-bold text-[#00ffff] [text-shadow:0_0_10px_#00ffff] mb-[63px] pl-[10px]">功能操作面板</h2>
            <Field label="ARIMA p (AR阶数):" value="5" mb="mb-[30px]" />
            <Field label="ARIMA d (差分阶数):" value="1" mb="mb-[29px]" />
            <Field label="ARIMA q (MA阶数):" value="0" mb="mb-[30px]" />
            <Field label="模型文件名 (保存时):" value="test.joblib" mb="mb-[8px]" />
            <p className="text-[20.4px] leading-[28px] text-[#6a7796]">建议文件名包含频率、案件类型和年份。若留空，后端将使用默认名。</p>
            <div className="mt-[25px] h-[72px] flex items-center justify-center rounded-[16px] bg-[#00ffff] text-[25.6px] font-bold text-[#0a192f] shadow-[0_0_20px_rgba(0,255,255,.45)]">开始训练模型</div>
            <div className="mt-[33px] h-[36px] leading-[36px] text-[25.6px] font-bold text-[#00ffff] [text-shadow:0_0_8px_rgba(0,255,255,.6)]">模型摘要 (部分):</div>
            <div className="relative mt-[16px] h-[260px] rounded-t-[13px] border border-[#0a5467] pl-[18px] pt-[19px] overflow-hidden">
              <pre className="font-['Liberation_Mono',monospace] text-[16px] leading-[25.3px] tracking-[-0.6px] text-[#8892b0]">{SUMMARY}</pre>
              <div className="absolute top-[2px] right-[2px] w-[11px] h-[84px] rounded-full bg-[#0a1630]" />
            </div>
          </div>
          <div className="absolute right-[1px] top-[156px] bottom-[30px] w-[11px] rounded-full bg-[linear-gradient(transparent,#05586c_20%)]">
            <div className="absolute left-[3px] top-[266px] w-[6px] h-[234px] rounded-full bg-[#00ffff]" />
          </div>
        </aside>

        <main className="relative flex-1 min-w-0 -mr-[4px] overflow-hidden rounded-[13px] border-2 border-[#12e6ee] pt-[29px] pl-[30px] pr-[31px] shadow-[inset_0_0_20px_rgba(0,255,255,.28)]">
          <section className="relative h-[600px] overflow-hidden rounded-[13px] border-2 border-[#12e6ee] shadow-[0_0_22px_rgba(0,255,255,.45)]">
            <MapArt />
            <div className="absolute left-[18px] top-[18px]">
              <MapButton>
                <span className="font-['Liberation_Sans',sans-serif] text-[38px] leading-none text-black">+</span>
              </MapButton>
              <MapButton last>
                <span className="font-['Liberation_Sans',sans-serif] text-[38px] leading-none text-black">−</span>
              </MapButton>
              <div className="h-[20px]" />
              <MapButton>
                <svg viewBox="0 0 20 20" className="w-[20px] h-[20px]">
                  <path d="M10 1 L19 7 L16 18 L4 18 L1 7 Z" fill="#444" />
                </svg>
              </MapButton>
              <MapButton last>
                <div className="w-[17px] h-[17px] bg-[#444]" />
              </MapButton>
              <div className="h-[23px]" />
              <MapButton soft>
                <SquarePen size={21} color="#444" strokeWidth={2.2} />
              </MapButton>
              <MapButton soft>
                <svg viewBox="0 0 20 24" className="w-[17px] h-[20px]" fill="none" stroke="#555" strokeWidth={1.4}>
                  <path d="M1 5 H19 M7 5 V2 H13 V5 M3 8 V23 H17 V8 M7 9 V22 M10 9 V22 M13 9 V22" />
                </svg>
              </MapButton>
            </div>
            <div className="absolute right-0 bottom-0 h-[25px] px-[7px] flex items-center gap-[5px] bg-[#d8d8d8] text-[18px] text-[#333] font-['Liberation_Sans',sans-serif] whitespace-pre">
              <svg viewBox="0 0 12 8" className="w-[19px] h-[13px]">
                <rect width="12" height="4" fill="#4c7be1" />
                <rect y="4" width="12" height="4" fill="#ffd500" />
              </svg>
              <span>
                <span className="text-[#0078a8]">Leaflet</span> | © <span className="text-[#0078a8]">Stadia Maps</span> © <span className="text-[#0078a8]">OpenMapTiles</span> © <span className="text-[#0078a8]">OpenStreetMap</span> contributors
              </span>
            </div>
          </section>

          <div className="mt-[30px] pr-[2px] flex justify-center gap-[32px]">
            {[
              { title: "犯罪数量趋势 (实际 vs. 预测)", chart: CHART_ONE },
              { title: "预测置信区间与历史对比", chart: CHART_TWO },
            ].map(({ title, chart }) => (
              <div key={chart.id} className="w-[925px] h-[500px] shrink-0 rounded-[13px] border border-[#0a3442] bg-[#061129]">
                <h3 className="h-[69px] pt-[29px] leading-[40px] text-center text-[27.2px] font-bold text-[#00ffff] [text-shadow:0_0_5px_rgba(0,255,255,.6)]">{title}</h3>
                <Chart {...chart} />
              </div>
            ))}
          </div>

          <div className="absolute left-[1966px] top-[876px] w-[61px] h-[91px] flex items-center justify-center rounded-[16px] border border-[#0c8a9c] bg-[#083a5a] text-[38px] font-bold text-[#00ffff] shadow-[0_0_14px_rgba(0,255,255,.45)]">&gt;</div>
        </main>
      </div>

      <footer className="flex-1 flex items-center justify-center bg-[linear-gradient(90deg,#0b2d47,#0a2549_45%,#0a2f50)] text-[21.6px] text-[#8f99b6] whitespace-pre">
        <span className="tracking-[-0.55px]">©2025 Security Guards </span>城市犯罪大数据时空分析与预测系统
      </footer>
    </div>
  );
}
